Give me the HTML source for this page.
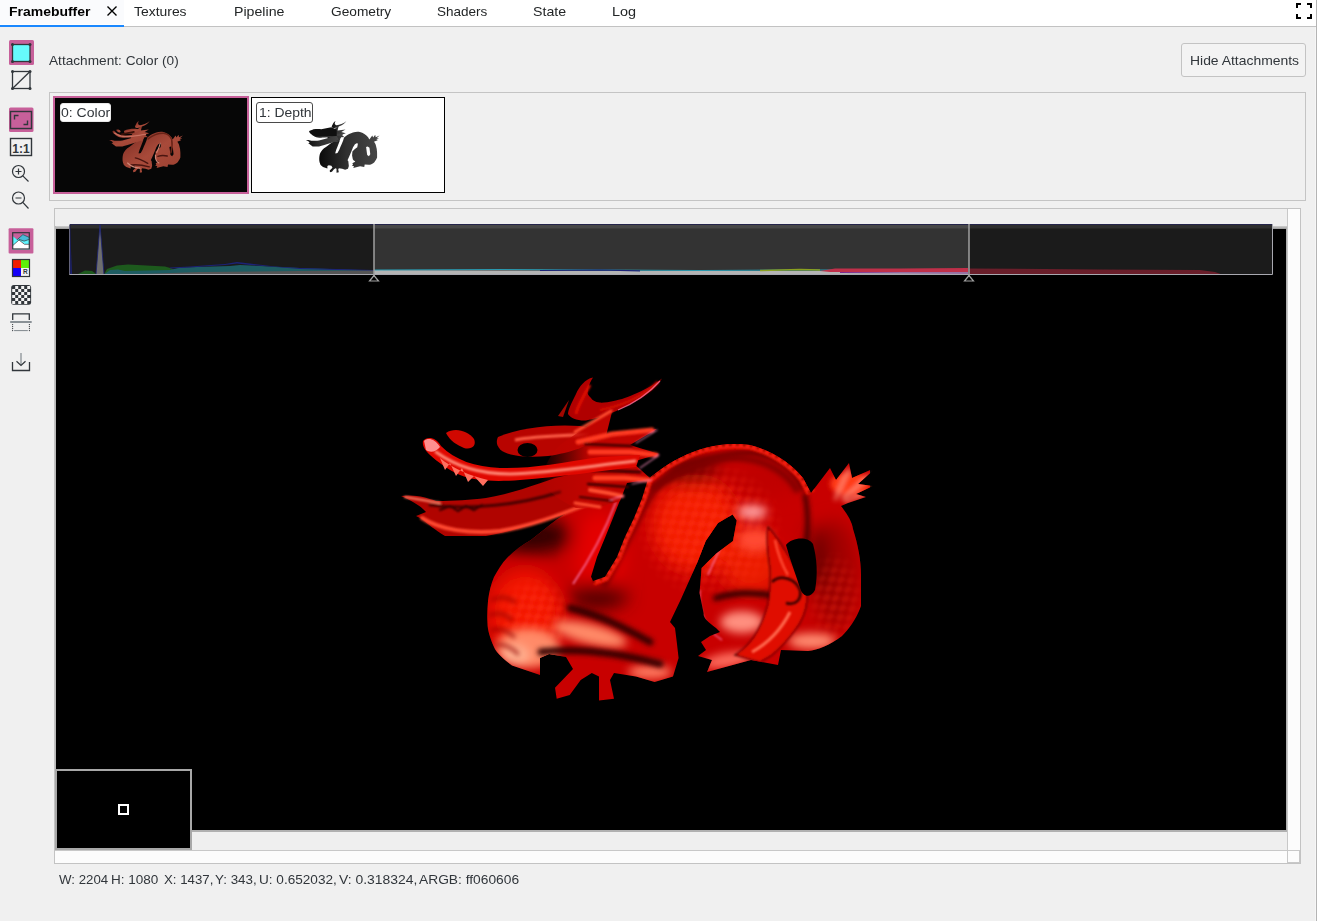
<!DOCTYPE html>
<html><head><meta charset="utf-8">
<style>
*{margin:0;padding:0;box-sizing:border-box}
html,body{width:1317px;height:921px;overflow:hidden;background:#f0f0f0;font-family:"Liberation Sans",sans-serif;font-size:13px;color:#31363b}
.a{position:absolute}
.t{position:absolute;white-space:nowrap;line-height:1}
</style></head><body>
<!-- tab bar -->
<div class="a" style="left:0;top:0;width:1317px;height:26px;background:#fff"></div>
<div class="a" style="left:0;top:0;width:124px;height:24px;background:#fafbfd"></div>
<div class="a" style="left:0;top:26px;width:1317px;height:1px;background:#c2c2c2"></div>
<div class="a" style="left:0;top:25px;width:124px;height:2px;background:#1a88ff"></div>
<div class="t" style="left:9px;top:5px;font-weight:bold;color:#000;transform:scaleX(1.074);transform-origin:0 0">Framebuffer</div>
<svg class="a" style="left:106px;top:5px" width="12" height="12" viewBox="0 0 12 12"><path d="M1.5,1.5 L10.5,10.5 M10.5,1.5 L1.5,10.5" stroke="#000" stroke-width="1.4"/></svg>
<div class="t" style="left:134px;top:5px;color:#232627;transform:scaleX(1.07);transform-origin:0 0">Textures</div>
<div class="t" style="left:233.5px;top:5px;color:#232627;transform:scaleX(1.09);transform-origin:0 0">Pipeline</div>
<div class="t" style="left:330.5px;top:5px;color:#232627;transform:scaleX(1.055);transform-origin:0 0">Geometry</div>
<div class="t" style="left:437px;top:5px;color:#232627;transform:scaleX(1.04);transform-origin:0 0">Shaders</div>
<div class="t" style="left:532.5px;top:5px;color:#232627;transform:scaleX(1.09);transform-origin:0 0">State</div>
<div class="t" style="left:611.5px;top:5px;color:#232627;transform:scaleX(1.11);transform-origin:0 0">Log</div>
<svg class="a" style="left:1296px;top:3px" width="16" height="16" viewBox="0 0 16 16"><path d="M1,5 V1 H5 M11,1 H15 V5 M15,11 V15 H11 M5,15 H1 V11" fill="none" stroke="#000" stroke-width="2"/></svg>
<div class="a" style="left:1315px;top:27px;width:1px;height:894px;background:#f6f6f6"></div><div class="a" style="left:1316px;top:0;width:1px;height:921px;background:#b4b4b4"></div>

<!-- left toolbar -->
<svg class="a" style="left:0;top:30px" width="45" height="350" viewBox="0 30 45 350">
<g fill="#c7609a"><rect x="9" y="40" width="25" height="25" rx="1.5"/><rect x="9" y="107.5" width="24.5" height="24.5" rx="1.5"/><rect x="8.6" y="228.3" width="24.8" height="25.1" rx="1"/></g>
<g stroke="#31363b" stroke-width="1.3" fill="none">
<rect x="12.5" y="44.5" width="17.5" height="17" fill="#66fafc"/>
<rect x="12.5" y="71.5" width="17.5" height="17"/>
<path d="M12.5,88.5 L30,71.5"/>
</g>
<g fill="#31363b">
<circle cx="12.5" cy="44.5" r="1.5"/><circle cx="30" cy="44.5" r="1.5"/><circle cx="12.5" cy="61.5" r="1.5"/><circle cx="30" cy="61.5" r="1.5"/>
<circle cx="12.5" cy="71.5" r="1.5"/><circle cx="30" cy="71.5" r="1.5"/><circle cx="12.5" cy="88.5" r="1.5"/><circle cx="30" cy="88.5" r="1.5"/>
</g>
<g stroke="#31363b" stroke-width="1.4" fill="none">
<rect x="10.5" y="111.5" width="21" height="17"/>
<path d="M14.5,119.5 V115.5 H18.5 M23.5,124.5 H27.5 V120.5"/>
<rect x="10.5" y="138.5" width="21" height="17"/>
</g>
<text x="21" y="152.5" font-family="Liberation Sans" font-weight="bold" font-size="12" fill="#31363b" text-anchor="middle">1:1</text>
<g stroke="#31363b" stroke-width="1.2" fill="none">
<circle cx="18.5" cy="171.5" r="6"/><path d="M22.8,175.8 L28.5,181.5 M15.5,171.5 H21.5 M18.5,168.5 V174.5"/>
<circle cx="18.5" cy="198" r="6"/><path d="M22.8,202.3 L28.5,208.5 M15.5,198 H21.5"/>
</g>
<!-- histogram icon -->
<rect x="12.2" y="232.2" width="17.6" height="17.3" fill="#c7609a"/>
<path d="M12.2,235.7 L17,239.6 L22.9,234.6 L29.8,237.5 V249.5 H12.2 Z" fill="#5ff8ff"/>
<path d="M12.2,235.7 L17,239.6 L22.9,234.6 L29.8,237.5 V239.3 L24.1,241.1 L18.7,239.3 L17,240.3 Z" fill="#48bcd8"/>
<path d="M12.2,245.9 L19,240 L24.7,244.1 H29.8 V249.5 H12.2 Z" fill="#fff"/>
<path d="M12.6,245.7 L19,240 L24.5,244.3 H29.5 M17,239.8 L22.9,234.6 L29.5,237.5 M18.7,239.3 L24.1,241.1 L29.5,239.3" fill="none" stroke="#31363b" stroke-width="0.7"/>
<rect x="12.7" y="232.7" width="16.6" height="16.3" fill="none" stroke="#31363b" stroke-width="1.2"/>
<!-- rgba -->
<rect x="12.5" y="259.5" width="8.5" height="8.5" fill="#f21d00"/>
<rect x="21" y="259.5" width="8.5" height="8.5" fill="#5ef00a"/>
<rect x="12.5" y="268" width="8.5" height="8.5" fill="#1500f8"/>
<rect x="21" y="268" width="8.5" height="8.5" fill="#f4f4f4"/>
<text x="25.3" y="274.4" font-family="Liberation Sans" font-weight="bold" font-size="6.5" fill="#31363b" text-anchor="middle">R</text>
<rect x="12.5" y="259.5" width="17" height="17" fill="none" stroke="#31363b" stroke-width="1.2"/>
<!-- checker -->
<g>
<rect x="11.2" y="284.9" width="19.9" height="19.8" rx="2.5" fill="#31363b"/>
<path fill="#f4f4f4" d="M15.20,285.90h3.00v3.00h-3.00zM21.20,285.90h3.00v3.00h-3.00zM27.20,285.90h3.00v3.00h-3.00zM12.20,288.90h3.00v3.00h-3.00zM18.20,288.90h3.00v3.00h-3.00zM24.20,288.90h3.00v3.00h-3.00zM15.20,291.90h3.00v3.00h-3.00zM21.20,291.90h3.00v3.00h-3.00zM27.20,291.90h3.00v3.00h-3.00zM12.20,294.90h3.00v3.00h-3.00zM18.20,294.90h3.00v3.00h-3.00zM24.20,294.90h3.00v3.00h-3.00zM15.20,297.90h3.00v3.00h-3.00zM21.20,297.90h3.00v3.00h-3.00zM27.20,297.90h3.00v3.00h-3.00zM12.20,300.90h3.00v3.00h-3.00zM18.20,300.90h3.00v3.00h-3.00zM24.20,300.90h3.00v3.00h-3.00z"/>
</g>
<!-- flip -->
<path d="M12.7,320 V313.8 H29.3 V320" fill="none" stroke="#31363b" stroke-width="1.3"/>
<rect x="10.2" y="321" width="21.5" height="2" fill="#8a9196"/>
<g fill="#31363b"><circle cx="12.6" cy="324.6" r="0.65"/><circle cx="12.6" cy="326.6" r="0.65"/><circle cx="12.6" cy="328.6" r="0.65"/><circle cx="12.6" cy="330.6" r="0.65"/><circle cx="29.4" cy="324.6" r="0.65"/><circle cx="29.4" cy="326.6" r="0.65"/><circle cx="29.4" cy="328.6" r="0.65"/><circle cx="29.4" cy="330.6" r="0.65"/></g>
<rect x="14.1" y="330" width="13.7" height="1.1" fill="#8a9196"/>
<!-- save -->
<path d="M12.5,362 V370.5 H29.5 V362" fill="none" stroke="#31363b" stroke-width="1.3"/>
<path d="M21,353 V365" fill="none" stroke="#8a9196" stroke-width="1.3"/>
<path d="M16.5,361.3 L21,365.5 L25.5,361.3" fill="none" stroke="#31363b" stroke-width="1.2"/>
</svg>

<!-- attachment label -->
<div class="t" style="left:49px;top:53.5px;transform:scaleX(1.05);transform-origin:0 0">Attachment: Color (0)</div>
<div class="a" style="left:1181px;top:43px;width:125px;height:34px;border:1px solid #c3c3c3;border-radius:3px;background:#f3f3f3"></div>
<div class="t" style="left:1189.5px;top:54px;transform:scaleX(1.07);transform-origin:0 0">Hide Attachments</div>

<!-- thumbnails panel -->
<div class="a" style="left:49px;top:92px;width:1257px;height:109px;border:1px solid #c4c4c4"></div>
<div class="a" style="left:53px;top:96px;width:196px;height:98px;border:2px solid #c7609a;background:#060606"></div>
<div class="a" style="left:251px;top:97px;width:194px;height:96px;border:1px solid #000;background:#fff"></div>
<svg class="a" style="left:0;top:0" width="460" height="200" viewBox="0 0 460 200">
<defs>
<linearGradient id="gDepth" x1="0" y1="0" x2="1" y2="0"><stop offset="0" stop-color="#0a0a0a"/><stop offset="0.45" stop-color="#303030"/><stop offset="1" stop-color="#474747"/></linearGradient>
<linearGradient id="gMini" x1="0" y1="0" x2="1" y2="1"><stop offset="0" stop-color="#7a2a20"/><stop offset="0.5" stop-color="#a84a3a"/><stop offset="1" stop-color="#9a4030"/></linearGradient>
</defs>
<g transform="matrix(0.1548 0 0 0.1594 47.1 61.0)" fill="url(#gMini)">
<use href="#dBody"/><use href="#dHorn"/><use href="#dMane"/><use href="#dLow"/><use href="#dJaw"/><use href="#dBrow"/><use href="#dNose"/>
<path d="M662,470 L650,478 L628.5,479 L620.7,498.6 L613,518 L605,537.7 L597,557 L591,576.8 L593,581 L605,576.8 L617,557 L624.6,537.7 L634,518 L642,498.6 L648,479 Z" fill="#060606"/>
<path d="M790,540 L800,536 L812,545 L817,585 L808,598 L797,590 Z" fill="#060606"/>
<g fill="none" stroke-linecap="round">
<path d="M570,608 C600,615 625,628 650,642 M541,652 C575,648 615,652 660,664 M716,598 C735,592 755,592 776,596" stroke="#4a1510" stroke-width="9"/>
<path d="M652,488 C688,462 725,452 752,453 C778,456 794,470 802,488 M805,495 C810,520 808,545 800,575" stroke="#6a2418" stroke-width="10"/>
<path d="M436,452 C455,466 480,474 510,474 C550,473 590,466 635,461" stroke="#c87060" stroke-width="8"/>
<path d="M731,516 C726,540 714,560 708,575 M700,590 C698,610 705,630 722,640 M520,640 C540,660 560,670 600,672" stroke="#d08878" stroke-width="7"/>
<path d="M480,460 L560,445" stroke="#3a1008" stroke-width="12"/>
</g>
</g>
<g transform="matrix(0.1548 0 0 0.1594 243.8 61.0)" fill="url(#gDepth)">
<use href="#dBody"/><use href="#dHorn"/><use href="#dMane"/><use href="#dLow"/><use href="#dJaw"/><use href="#dBrow"/><use href="#dNose"/>
<path d="M423,441 C440,428 470,426 500,428 L565,415 L600,430 L600,470 L470,470 L440,458 Z" fill="#101010"/>
<path d="M662,470 L650,478 L628.5,479 L620.7,498.6 L613,518 L605,537.7 L597,557 L591,576.8 L593,581 L605,576.8 L617,557 L624.6,537.7 L634,518 L642,498.6 L648,479 Z" fill="#fff"/>
<path d="M790,540 L800,536 L812,545 L817,585 L808,598 L797,590 Z" fill="#fff"/>
</g>
</svg>
<div class="a" style="left:59.5px;top:102.5px;width:51px;height:19.5px;border-radius:3px;background:#fff;border:1px solid #e8e8e8"></div>
<div class="t" style="left:60.5px;top:106px;transform:scaleX(1.08);transform-origin:0 0">0: Color</div>
<div class="a" style="left:256px;top:102px;width:57px;height:21px;border-radius:3px;background:#fff;border:1px solid #4a4a4a"></div>
<div class="t" style="left:258.5px;top:105.5px;transform:scaleX(1.07);transform-origin:0 0">1: Depth</div>

<!-- main view -->
<div class="a" style="left:54px;top:208px;width:1247px;height:656px;border:1px solid #c3c3c3;background:#efefef"></div>
<div class="a" style="left:55px;top:226px;width:1232px;height:3px;background:linear-gradient(#cfcfcf,#9a9a9a)"></div>
<div class="a" style="left:55px;top:226px;width:1px;height:606px;background:#b8b8b8"></div>
<div class="a" style="left:56px;top:229px;width:1230px;height:601px;background:#000"></div>
<div class="a" style="left:56px;top:830px;width:1231px;height:2px;background:#b0b0b0"></div>
<div class="a" style="left:1286px;top:228px;width:1px;height:604px;background:#b0b0b0"></div>
<!-- v scrollbar -->
<div class="a" style="left:1287px;top:209px;width:13px;height:642px;background:#fcfcfc;border-left:1px solid #c8c8c8"></div>
<!-- h scrollbar -->
<div class="a" style="left:55px;top:850px;width:1245px;height:13px;background:#fcfcfc;border-top:1px solid #c8c8c8"></div>
<div class="a" style="left:1287px;top:850px;width:13px;height:13px;background:#fcfcfc;border:1px solid #c8c8c8"></div>

<!-- dragon -->
<svg class="a" style="left:0;top:0" width="1317" height="921" viewBox="0 0 1317 921">
<defs>
<filter id="bl1" x="-50%" y="-50%" width="200%" height="200%"><feGaussianBlur stdDeviation="1"/></filter>
<filter id="bl2s" x="-10%" y="-10%" width="120%" height="120%"><feGaussianBlur stdDeviation="1.6"/></filter>
<filter id="bl2" x="-50%" y="-50%" width="200%" height="200%"><feGaussianBlur stdDeviation="2.5"/></filter>
<filter id="bl4" x="-50%" y="-50%" width="200%" height="200%"><feGaussianBlur stdDeviation="5"/></filter>
<filter id="bl8" x="-80%" y="-80%" width="260%" height="260%"><feGaussianBlur stdDeviation="9"/></filter>
<path id="dBody" d="M575,508 L620,500 L660,470 C670,462 690,452 705,448 C720,444 735,443 750,445 C770,450 790,462 803,478 L811,493 L830,468 L836,480 L849,463 L852,478 L877,467 L858,484 L873,486 L856,494 L866,497 L848,503 L841,506 C848,515 852,522 853,529 C858,545 861,560 861,575 L861,606 C856,620 848,630 842,636 C830,645 818,650 808,651 L781,650 L778,665 L751,660 L707,672 L712,660 L698,656 L706,650 L701,642 L710,636 L720,632 L716,628 C708,622 703,618 703.7,613.5 L699.5,593 L701.6,568 L716,553.7 L733,541 L736.7,520.6 L732.6,514.4 L718,523 L705.7,541 L697.5,562 L681,599 L670,622 L675,628 L677,644 L678.6,658 L673,676.6 L654.6,682 L636,676.6 L614,673 L610,680 L614,698.7 L599,700.6 L599,676.6 L591.8,673 L580.7,680 L569.7,695 L556.7,698.7 L555,687.7 L573,669 L566,657 L549,654 L540,658 L540,675 L512,665.5 C502,658 496,652 494,647 C490,638 487.5,630 487.5,623 C487,615 487.5,608 488,601 C489,592 491,584 494,577 C498,570 502,563 507,558 C514,551 522,545 531,540 C540,533 548,526 556,520 C562,516 568,512 575,508 Z"/>
<linearGradient id="gMane" gradientUnits="userSpaceOnUse" x1="540" y1="0" x2="590" y2="0"><stop offset="0" stop-color="#c00400" stop-opacity="0"/><stop offset="1" stop-color="#c00400" stop-opacity="1"/></linearGradient>
<clipPath id="cBody"><use href="#dBody"/></clipPath>
<pattern id="scales" x="0" y="0" width="15" height="12" patternUnits="userSpaceOnUse" patternTransform="rotate(-35)">
<ellipse cx="4" cy="3.5" rx="4.2" ry="3.2" fill="#ff3418" opacity="0.6"/>
<ellipse cx="11.5" cy="9.5" rx="4.2" ry="3.2" fill="#ff3418" opacity="0.6"/>
</pattern>
<radialGradient id="scMaskG"><stop offset="0" stop-color="#fff"/><stop offset="0.6" stop-color="#fff" stop-opacity="0.7"/><stop offset="1" stop-color="#fff" stop-opacity="0"/></radialGradient>
<mask id="scMask"><ellipse cx="710" cy="530" rx="75" ry="70" fill="url(#scMaskG)"/><ellipse cx="835" cy="600" rx="30" ry="50" fill="url(#scMaskG)" opacity="0.5"/><ellipse cx="535" cy="620" rx="40" ry="45" fill="url(#scMaskG)"/></mask>
<path id="dHorn" d="M593,377.5 C585,379 579,387 576,394 C572,402 568,410 568,414 C570,418 578,421 586,420.5 C595,419 600,417 605,415.6 C620,410 640,400 648.6,392.8 C655,388 659,383 662,378.5 C656,383 647,389 637.7,392.8 C628,397 620,400 616,400.4 C608,402 603,403 599.7,402.6 C595,402 592,400 591,398 C588,395 587,393 587.8,391.7 C588,388 589,385 590,383 C591,381 592,379 593,377.5 Z"/>
<path id="dJaw" d="M423,441 C427,436 436,437 441,446 C455,460 475,467 500,468 C530,469 560,463 600,457 L640,455 L636,467 C600,471 560,477 520,480 C495,482 475,481 460,475 C448,470 438,462 430,455 C425,450 422,446 423,441 Z"/>
<path id="dMane" d="M560,445 L613,408 L606,436 L657,429 L630,445 L659,454 L632,462 L651,479 L627,483 L620,501 L600,507 L576,508 C562,502 548,492 540,480 C545,465 552,452 560,445 Z"/>
<path id="dLow" d="M401,496 C415,494 428,498 436,501 C455,501 470,500 486,498 C510,494 535,485 555,478 L600,468 L612,492 C592,505 577,511 562,515 C532,524 506,533 486,536 L445,536 C435,530 428,524 422,519 L416,516 L426,512 C420,505 410,500 401,496 Z"/>
<path id="dBrow" d="M498,437 C520,428 550,424 580,426 L604,432 C592,446 570,453 548,456 C528,458 510,456 502,451 C496,446 496,441 498,437 Z"/>
<path id="dNose" d="M446,433 C455,427 468,431 474,439 C477,446 471,450 464,448 C457,445 450,441 446,433 Z"/>
</defs>
<!-- body -->
<g clip-path="url(#cBody)">
<rect x="480" y="440" width="390" height="270" fill="#c80000"/>
<g filter="url(#bl8)">
<ellipse cx="695" cy="525" rx="42" ry="45" fill="#f41a06"/>
<ellipse cx="760" cy="480" rx="40" ry="18" fill="#c00000"/>
<ellipse cx="600" cy="555" rx="25" ry="45" fill="#e40400"/>
<ellipse cx="525" cy="612" rx="36" ry="42" fill="#f41406"/>
<ellipse cx="752" cy="565" rx="30" ry="28" fill="#ec1a04"/>
<ellipse cx="835" cy="575" rx="22" ry="55" fill="#a00000"/>
<ellipse cx="818" cy="560" rx="8" ry="35" fill="#500000"/>
<ellipse cx="532" cy="536" rx="40" ry="18" fill="#300000"/>
<ellipse cx="598" cy="596" rx="30" ry="12" fill="#400000"/>
<ellipse cx="690" cy="470" rx="30" ry="14" fill="#700000"/>
</g>
<rect x="480" y="440" width="390" height="270" fill="url(#scales)" mask="url(#scMask)" filter="url(#bl2s)"/>
<g filter="url(#bl4)">
<ellipse cx="528" cy="648" rx="32" ry="20" fill="#ff8a68"/>
<ellipse cx="515" cy="655" rx="14" ry="10" fill="#ffb090"/>
<ellipse cx="590" cy="634" rx="38" ry="10" fill="#ff8a68" transform="rotate(14 590 634)"/>
<ellipse cx="650" cy="672" rx="22" ry="7" fill="#ff7a60"/>
<ellipse cx="752" cy="512" rx="15" ry="7" fill="#ffa0a0"/>
<ellipse cx="742" cy="622" rx="22" ry="11" fill="#ff9080"/>
<ellipse cx="812" cy="641" rx="24" ry="8" fill="#ff8a70"/>
<ellipse cx="728" cy="660" rx="26" ry="7" fill="#ff7060" transform="rotate(-10 728 660)"/>
<ellipse cx="785" cy="585" rx="9" ry="7" fill="#ff6048"/>
<ellipse cx="755" cy="540" rx="18" ry="12" fill="#ff4a30"/>
</g>
<g filter="url(#bl2)" fill="none" stroke-linecap="round">
<path d="M570,608 C600,615 625,628 650,642" stroke="#300000" stroke-width="7"/>
<path d="M541,652 C575,648 615,652 660,664" stroke="#300000" stroke-width="7"/>
<path d="M716,598 C735,592 755,592 776,596" stroke="#300000" stroke-width="6"/>
<path d="M492,600 C500,596 508,597 515,602 M490,615 C498,612 506,614 512,620 M492,630 C500,628 508,631 514,637 M497,645 C505,644 512,648 518,654" stroke="#900000" stroke-width="2.5"/>
<path d="M652,488 C688,462 725,452 752,453 C778,456 794,470 802,488" stroke="#700000" stroke-width="6"/>
<path d="M805,495 C810,520 808,545 800,575" stroke="#300000" stroke-width="4"/>
</g>
<g filter="url(#bl2)" fill="none">
<path d="M603,588 L614,567 L624,547 L634,527 L644,507 L654,490 C672,473 702,460 732,458 C762,458 786,470 798,492" stroke="#800000" stroke-width="6"/>
</g>
<g filter="url(#bl1)" fill="none">
<path d="M593,581 L605,576.8 L617,557 L624.6,537.7 L634,518 L642,498.6 L648,479 L660,470 C670,462 690,452 705,448 C720,444 735,443 750,445 C770,450 790,462 803,478 L811,493" stroke="#f41c08" stroke-width="9"/>
<path d="M593,581 L605,576.8 L617,557 L624.6,537.7 L634,518 L642,498.6 L648,479 L660,470 C670,462 690,452 705,448 C720,444 735,443 750,445 C770,450 790,462 803,478 L811,493" stroke="#500000" stroke-width="4" stroke-dasharray="2,5"/>
</g>
<g filter="url(#bl2)">
<ellipse cx="850" cy="484" rx="20" ry="12" fill="#ff3a18"/>
<path d="M835,500 L849,468 M842,500 L870,475 M845,502 L866,494" stroke="#ff9a80" stroke-width="2.5" fill="none"/>
</g>
<!-- claw arm -->
<path d="M768,527 C776,535 783,548 786,552 C792,562 797,572 800,580 C805,586 808,592 807,600 C806,610 803,620 795,630 C788,640 780,648 772,655 L760,662 L735,655 C745,648 752,642 758,630 C764,618 768,608 769,598 C770,588 771,578 770,568 C768,555 766,540 768,527 Z" fill="#e00800" stroke="#3a0000" stroke-width="1.2" filter="url(#bl1)"/>
<g filter="url(#bl1)" fill="none">
<path d="M772,582 C780,574 795,578 800,590 C802,600 795,606 786,603" stroke="#300000" stroke-width="2.5"/>
<path d="M790,612 C782,628 770,642 752,652" stroke="#ff6a50" stroke-width="3"/>
<path d="M775,540 C778,555 782,565 788,575" stroke="#ff4a30" stroke-width="2.5"/>
</g>
<g filter="url(#bl1)" fill="none">
<path d="M731,516 C726,540 714,560 708,575" stroke="#ff90d0" stroke-width="1.5" opacity="0.7"/>
<path d="M616,502 C606,528 592,556 573,584" stroke="#ff90d0" stroke-width="1.5" opacity="0.8"/>
<path d="M700,590 C698,610 705,630 722,640" stroke="#ff90d0" stroke-width="1.5" opacity="0.6"/>
</g>
</g>
<!-- black cuts body -->
<g fill="#000">
<path d="M662,470 L650,478 L628.5,479 L620.7,498.6 L613,518 L605,537.7 L597,557 L591,576.8 L593,581 L605,576.8 L617,557 L624.6,537.7 L634,518 L642,498.6 L648,479 Z"/>
<path d="M786,545 C792,537 808,536 813,544 C817,558 818,575 815,590 C811,598 803,598 800,588 C796,575 790,560 786,545 Z"/>
</g>
<!-- head -->
<g>
<use href="#dHorn" fill="#b00000"/>
<g filter="url(#bl1)" fill="none">
<path d="M590,385 C584,395 578,405 576,414" stroke="#e01000" stroke-width="3"/>
<path d="M600,410 C625,405 645,395 658,382" stroke="#d00800" stroke-width="3"/>
</g>
<path d="M618,410 C635,403 650,392 660,381" stroke="#ff80b0" stroke-width="1.2" fill="none" opacity="0.7"/>
<path d="M569,400 L558,416 L563,417 Z" fill="#a00800"/>
<use href="#dLow" fill="#b00400"/>
<g filter="url(#bl1)" fill="none" stroke-linecap="round">
<path d="M422,518 C440,530 470,534 500,531 C530,526 555,517 590,503" stroke="#ff4a30" stroke-width="4"/>
<path d="M430,505 C470,510 520,505 560,492" stroke="#4a0000" stroke-width="3"/>
<path d="M405,497 L440,503" stroke="#ff8a70" stroke-width="2"/>
<path d="M440,510 L450,506 L458,511 L466,506 L474,510 L482,505" stroke="#300000" stroke-width="2"/>
</g>
<use href="#dBrow" fill="#b80400"/>
<path d="M515,440 C535,436 560,436 595,434" stroke="#ff6048" stroke-width="3" fill="none" filter="url(#bl1)"/>
<ellipse cx="527.5" cy="450" rx="10" ry="7" fill="#000"/>
<use href="#dNose" fill="#d00800"/>
<use href="#dMane" fill="url(#gMane)"/>
<g filter="url(#bl1)" fill="none" stroke-linecap="round">
<path d="M578,442 L612,434 L652,430" stroke="#ff3a20" stroke-width="5"/>
<path d="M590,452 L630,452 L656,455" stroke="#ff3a20" stroke-width="5"/>
<path d="M595,478 L625,478 L648,480" stroke="#ff4020" stroke-width="5"/>
<path d="M590,490 L608,493 L622,496" stroke="#ff5030" stroke-width="4"/>
<path d="M575,503 L600,507" stroke="#ff5030" stroke-width="3"/>
<path d="M585,444 L632,446" stroke="#400000" stroke-width="2.5"/>
<path d="M592,470 L640,472" stroke="#400000" stroke-width="3"/>
<path d="M588,484 L628,487" stroke="#400000" stroke-width="2.5"/>
<path d="M580,497 L612,501" stroke="#400000" stroke-width="2"/>
<path d="M575,432 L611,411" stroke="#ff5030" stroke-width="3"/>
<path d="M636,443 L657,430 M640,468 L659,455 M632,484 L652,480 M610,500 L624,496" stroke="#ff90c0" stroke-width="1.2" opacity="0.8"/>
</g>
<use href="#dJaw" fill="#e00800"/>
<g filter="url(#bl1)" fill="none" stroke-linecap="round">
<path d="M436,452 C455,466 480,474 510,474 C550,473 590,466 635,461" stroke="#ff8a78" stroke-width="3"/>
</g>
<path d="M440,458 L445,470 L450,463 L456,476 L462,468 L468,482 L474,476 L483,486 L488,480 C470,476 452,468 440,458 Z" fill="#ff7060"/>
<path d="M424,441 C428,437 435,439 440,447 C436,452 430,453 426,450 Z" fill="#ff9090"/>
</g>
</svg>
<!-- histogram -->
<svg class="a" style="left:0;top:0" width="1317" height="300" viewBox="0 0 1317 300">
<rect x="69.5" y="224" width="1203" height="50.5" fill="#1b1b1b"/>
<rect x="374" y="224" width="595" height="50.5" fill="#333"/>
<rect x="69.5" y="224.5" width="304.5" height="4" fill="#2e2e2e"/>
<rect x="969" y="224.5" width="303.5" height="4" fill="#2e2e2e"/>
<rect x="374" y="224.5" width="595" height="4" fill="#474747"/>
<path d="M77,274.5 L85,270.5 L92,271 L97,274.5 Z" fill="#1d5a1d"/>
<path d="M104,274.5 L107,269 L117,265.5 L128,264.5 L165,266.5 L172,268.5 L180,274.5 Z" fill="#1d5a1d"/>
<path d="M104,274.5 L110,270 L118,269.5 L125,271 L170,270 L180,267.5 L230,266 L240,265 L260,266 L300,268 L374,270.5 V274.5 Z" fill="#1e5c62"/>
<path d="M170,267.5 L190,266.5 L225,264 L237,262 L250,263.5 L275,266.5 L300,268 L374,270 L374,271 L300,269 L250,265 L237,263.5 L225,265 L190,267.5 L170,268.5 Z" fill="#1c2277"/>
<path d="M70,274.5 L70,226 L72,274.5 Z" fill="#1c2277"/>
<path d="M125,274.5 L200,272 L300,271 L374,270.5 V274.5 Z" fill="#555"/>
<path d="M96,274.5 L100,224.5 L104,274.5 Z" fill="#6e6e6e"/>
<path d="M96,274.5 L100,224.5 L104,274.5" fill="none" stroke="#1c2277" stroke-width="0.8"/>
<path d="M374,274.5 V270 L500,270.5 L700,271 L968,270.5 V274.5 Z" fill="#b4b4b4"/>
<path d="M374,270 L500,269.5 L600,270 L700,270.5 L800,270 L968,270" fill="none" stroke="#2a9ab0" stroke-width="1"/>
<path d="M540,270.5 L600,270 L640,270.8" fill="none" stroke="#1c2277" stroke-width="1.2"/>
<path d="M760,270.5 L800,269.5 L820,270" fill="none" stroke="#8aa020" stroke-width="1.5"/>
<path d="M820,271 L835,268.5 L900,268.5 L968,268 V272 L900,272 L830,272 Z" fill="#c0304a"/>
<path d="M840,272 L900,272.5 L968,272.5 V273.5 L840,273 Z" fill="#7a2a90"/>
<path d="M969,268.5 L1100,269.5 L1200,270 L1215,272 L1222,274.5 H969 Z" fill="#6a1e2a"/>
<path d="M69.5,224.5 H1272.5" stroke="#24244a" stroke-width="1"/>
<path d="M69.5,224 V274.5 H1272.5 V224" fill="none" stroke="#a8a8b0" stroke-width="1"/>
<path d="M70,225 V274" stroke="#1c1c44" stroke-width="1"/>
<path d="M374,224 V276" stroke="#a0a0a0" stroke-width="1.5"/>
<path d="M969,224 V276" stroke="#a0a0a0" stroke-width="1.5"/>
<path d="M374,275.5 L369.5,281 H378.5 Z M969,275.5 L964.5,281 H973.5 Z" fill="none" stroke="#a0a0a0" stroke-width="1.2"/>
</svg>

<!-- minimap -->
<div class="a" style="left:55px;top:769px;width:137px;height:81px;border:2px solid #a8a8a8;background:#000"></div>
<div class="a" style="left:118px;top:804px;width:11px;height:11px;border:2px solid #fff"></div>
<div class="t" style="left:59.0px;top:873px;transform:scaleX(1.02);transform-origin:0 0">W: 2204</div><div class="t" style="left:111.0px;top:873px;transform:scaleX(1.04);transform-origin:0 0">H: 1080</div><div class="t" style="left:164.0px;top:873px;transform:scaleX(1.02);transform-origin:0 0">X: 1437,</div><div class="t" style="left:215.0px;top:873px;transform:scaleX(1.03);transform-origin:0 0">Y: 343,</div><div class="t" style="left:258.5px;top:873px;transform:scaleX(1.045);transform-origin:0 0">U: 0.652032,</div><div class="t" style="left:338.5px;top:873px;transform:scaleX(1.07);transform-origin:0 0">V: 0.318324,</div><div class="t" style="left:418.5px;top:873px;transform:scaleX(1.06);transform-origin:0 0">ARGB: ff060606</div></body></html>
